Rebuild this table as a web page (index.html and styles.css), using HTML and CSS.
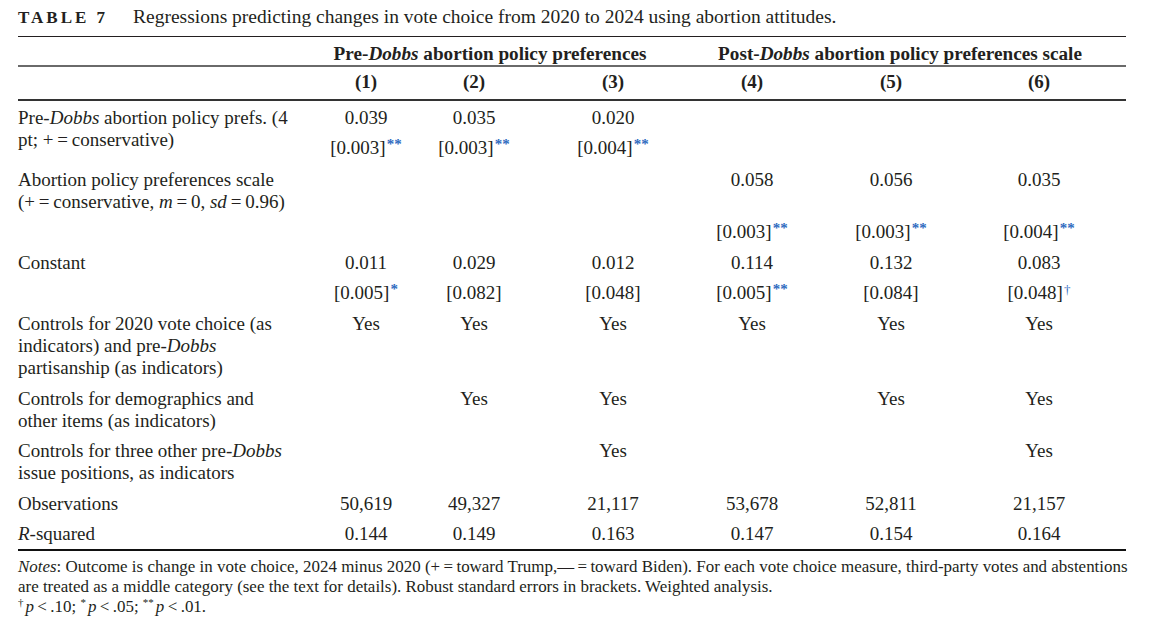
FILE: index.html
```html
<!DOCTYPE html>
<html lang="en">
<head>
<meta charset="utf-8">
<title>Table 7</title>
<link rel="stylesheet" href="styles.css">
</head>
<body>
<div class="page">
  <div class="caption">
    <span class="tag">TABLE 7</span>
    <span class="cap-text">Regressions predicting changes in vote choice from 2020 to 2024 using abortion attitudes.</span>
  </div>
  <div class="table">
    <div class="row head1">
      <div></div>
      <div class="grp grp-pre">Pre-<i>Dobbs</i> abortion policy preferences</div>
      <div class="grp grp-post">Post-<i>Dobbs</i> abortion policy preferences scale</div>
    </div>
    <div class="row head2">
      <div></div>
      <div class="c">(1)</div><div class="c">(2)</div><div class="c">(3)</div>
      <div class="c">(4)</div><div class="c">(5)</div><div class="c">(6)</div>
    </div>

    <div class="row body first">
      <div class="lab">Pre-<i>Dobbs</i> abortion policy prefs. (4<br>pt; +&#8201;=&#8201;conservative)</div>
      <div class="c"><div>0.039</div><div class="se">[0.003]<sup class="sig">**</sup></div></div>
      <div class="c"><div>0.035</div><div class="se">[0.003]<sup class="sig">**</sup></div></div>
      <div class="c"><div>0.020</div><div class="se">[0.004]<sup class="sig">**</sup></div></div>
      <div class="c"></div><div class="c"></div><div class="c"></div>
    </div>

    <div class="row body r2">
      <div class="lab">Abortion policy preferences scale<br>(+&#8201;=&#8201;conservative, <i>m</i>&#8201;=&#8201;0, <i>sd</i>&#8201;=&#8201;0.96)</div>
      <div class="c"></div><div class="c"></div><div class="c"></div>
      <div class="c"><div>0.058</div><div class="se far">[0.003]<sup class="sig">**</sup></div></div>
      <div class="c"><div>0.056</div><div class="se far">[0.003]<sup class="sig">**</sup></div></div>
      <div class="c"><div>0.035</div><div class="se far">[0.004]<sup class="sig">**</sup></div></div>
    </div>

    <div class="row body">
      <div class="lab">Constant</div>
      <div class="c"><div>0.011</div><div class="se">[0.005]<sup class="sig">*</sup></div></div>
      <div class="c"><div>0.029</div><div class="se">[0.082]</div></div>
      <div class="c"><div>0.012</div><div class="se">[0.048]</div></div>
      <div class="c"><div>0.114</div><div class="se">[0.005]<sup class="sig">**</sup></div></div>
      <div class="c"><div>0.132</div><div class="se">[0.084]</div></div>
      <div class="c"><div>0.083</div><div class="se">[0.048]<sup class="sig dag">&#8224;</sup></div></div>
    </div>

    <div class="row body">
      <div class="lab">Controls for 2020 vote choice (as<br>indicators) and pre-<i>Dobbs</i><br>partisanship (as indicators)</div>
      <div class="c">Yes</div><div class="c">Yes</div><div class="c">Yes</div>
      <div class="c">Yes</div><div class="c">Yes</div><div class="c">Yes</div>
    </div>

    <div class="row body">
      <div class="lab">Controls for demographics and<br>other items (as indicators)</div>
      <div class="c"></div><div class="c">Yes</div><div class="c">Yes</div>
      <div class="c"></div><div class="c">Yes</div><div class="c">Yes</div>
    </div>

    <div class="row body tight">
      <div class="lab">Controls for three other pre-<i>Dobbs</i><br>issue positions, as indicators</div>
      <div class="c"></div><div class="c"></div><div class="c">Yes</div>
      <div class="c"></div><div class="c"></div><div class="c">Yes</div>
    </div>

    <div class="row body">
      <div class="lab">Observations</div>
      <div class="c">50,619</div><div class="c">49,327</div><div class="c">21,117</div>
      <div class="c">53,678</div><div class="c">52,811</div><div class="c">21,157</div>
    </div>

    <div class="row body last tight">
      <div class="lab"><i>R</i>-squared</div>
      <div class="c">0.144</div><div class="c">0.149</div><div class="c">0.163</div>
      <div class="c">0.147</div><div class="c">0.154</div><div class="c">0.164</div>
    </div>
  </div>
  <div class="notes">
    <p><i>Notes</i>: Outcome is change in vote choice, 2024 minus 2020 (+&#8201;=&#8201;toward Trump,&#8212;&#8201;=&#8201;toward Biden). For each vote choice measure, third-party votes and abstentions<br>are treated as a middle category (see the text for details). Robust standard errors in brackets. Weighted analysis.</p>
    <p><sup class="fn">&#8224;</sup><i>p</i>&#8201;&lt;&#8201;.10; <sup class="fn">*</sup><i>p</i>&#8201;&lt;&#8201;.05; <sup class="fn">**</sup><i>p</i>&#8201;&lt;&#8201;.01.</p>
  </div>
</div>
</body>
</html>
```

FILE: styles.css
```css
html, body {
  margin: 0;
  padding: 0;
  background: #ffffff;
}

body {
  font-family: "Liberation Serif", "Times New Roman", serif;
  font-size: 19px;
  color: #231f20;
}

.page {
  width: 1108px;
  padding: 6px 0 0 18px;
}

.caption {
  display: flex;
  align-items: baseline;
  line-height: 22px;
  height: 22px;
}

.tag {
  font-weight: bold;
  font-size: 17px;
  letter-spacing: 3px;
  width: 115px;
}

.cap-text {
  font-size: 19.5px;
}

.table {
  margin-top: 8px;
  border-top: 1px solid #231f20;
}

.row {
  display: grid;
  grid-template-columns: 294px 108px 108px 170px 108px 170px 126px 24px;
  line-height: 22px;
}

.c {
  text-align: center;
}

.head1 {
  padding-top: 6px;
  border-bottom: 2px solid #6a6a6a;
  font-weight: bold;
  font-size: 19.2px;
}

.grp {
  text-align: center;
  white-space: nowrap;
}

.grp-pre {
  grid-column: 2 / 5;
  padding-right: 30px;
}

.grp-post {
  grid-column: 5 / 8;
}

.head2 {
  padding: 4px 0 6px;
  border-bottom: 2px solid #333333;
  font-weight: bold;
}

.body {
  margin-top: 9px;
}

.body.first {
  margin-top: 6px;
}

.body.r2 {
  margin-top: 10px;
}

.body.tight {
  margin-top: 8px;
}

.body.last {
  padding-bottom: 4px;
  border-bottom: 2px solid #111111;
}

.lab {
  white-space: nowrap;
}

.se {
  margin-top: 8px;
}

.se.far {
  margin-top: 30px;
}

.sig {
  color: #2f6bbf;
  font-size: 15px;
  font-weight: bold;
  line-height: 0;
  vertical-align: 5px;
  margin-left: 1px;
}

.sig.dag {
  font-weight: normal;
  font-size: 13px;
}

.notes {
  margin-top: 6px;
  font-size: 16.95px;
  line-height: 20px;
}

.notes p {
  margin: 0;
  white-space: nowrap;
}

.fn {
  font-size: 11px;
  line-height: 0;
  vertical-align: 6px;
  margin-right: 2px;
}
```
